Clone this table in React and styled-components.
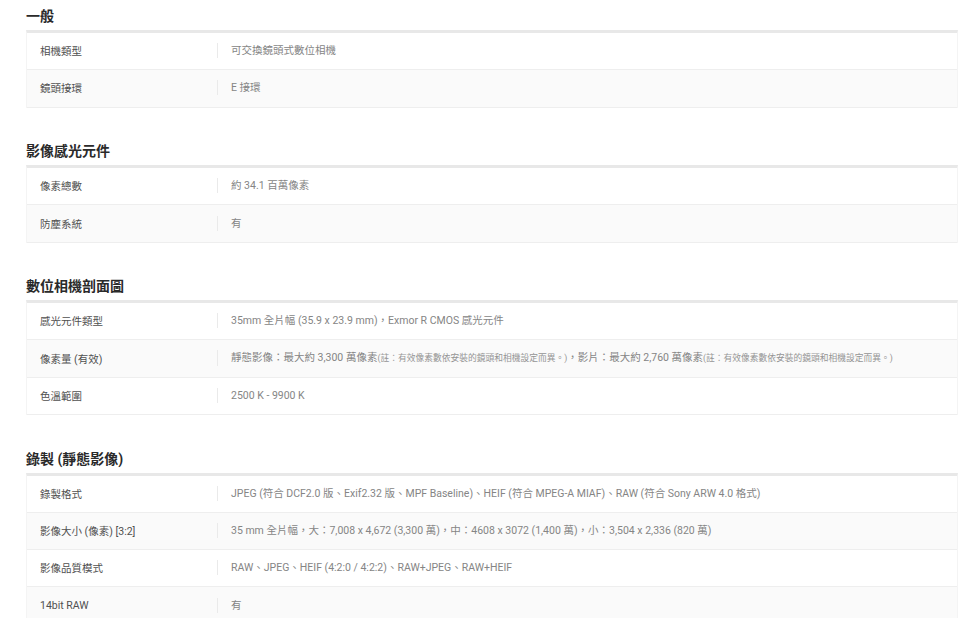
import React from "react";
import styled, { createGlobalStyle } from "styled-components";

const GlobalStyle = createGlobalStyle`
  html, body {
    margin: 0;
    padding: 0;
    background: #fff;
  }
  body {
    font-family: Roboto, "Noto Sans CJK TC", sans-serif;
    -webkit-font-smoothing: antialiased;
  }
`;

const Page = styled.div`
  width: 960px;
  padding: 6px 2px 0 26px;
  box-sizing: border-box;
`;

const Section = styled.section`
  margin-bottom: 33.5px;
`;

const Title = styled.h3`
  margin: 0 0 4px;
  font-size: 14px;
  line-height: 20px;
  font-weight: 700;
  color: #2a2a2a;
`;

const Table = styled.div`
  border-top: 3px solid #e8e8e8;
  border-left: 1px solid #f4f4f4;
  border-right: 1px solid #f4f4f4;
`;

const Row = styled.div`
  display: flex;
  align-items: center;
  height: 37.3px;
  box-sizing: border-box;
  border-bottom: 1px solid #eeeeee;
  padding-bottom: 1px;
  background: ${({ shaded }) => (shaded ? "#fafafa" : "#fff")};
`;

const Label = styled.div`
  width: 190px;
  flex: none;
  padding-left: 13px;
  box-sizing: border-box;
  font-size: 10.5px;
  color: #505050;
`;

const Value = styled.div`
  flex: 1;
  border-left: 1px solid #eaeaea;
  padding-left: 13px;
  line-height: 15px;
  font-size: 10.5px;
  color: #858585;
  white-space: nowrap;
`;

const Note = styled.span`
  font-size: 8.75px;
  color: #959595;
`;

const note = "(註：有效像素數依安裝的鏡頭和相機設定而異。)";

const sections = [
  {
    title: "一般",
    rows: [
      ["相機類型", "可交換鏡頭式數位相機"],
      ["鏡頭接環", "E 接環"],
    ],
  },
  {
    title: "影像感光元件",
    rows: [
      ["像素總數", "約 34.1 百萬像素"],
      ["防塵系統", "有"],
    ],
  },
  {
    title: "數位相機剖面圖",
    rows: [
      ["感光元件類型", "35mm 全片幅 (35.9 x 23.9 mm)，Exmor R CMOS 感光元件"],
      [
        "像素量 (有效)",
        <>
          靜態影像：最大約 3,300 萬像素<Note>{note}</Note>，影片：最大約 2,760 萬像素<Note>{note}</Note>
        </>,
      ],
      ["色溫範圍", "2500 K - 9900 K"],
    ],
  },
  {
    title: "錄製 (靜態影像)",
    rows: [
      ["錄製格式", "JPEG (符合 DCF2.0 版、Exif2.32 版、MPF Baseline)、HEIF (符合 MPEG-A MIAF)、RAW (符合 Sony ARW 4.0 格式)"],
      ["影像大小 (像素) [3:2]", "35 mm 全片幅，大：7,008 x 4,672 (3,300 萬)，中：4608 x 3072 (1,400 萬)，小：3,504 x 2,336 (820 萬)"],
      ["影像品質模式", "RAW、JPEG、HEIF (4:2:0 / 4:2:2)、RAW+JPEG、RAW+HEIF"],
      ["14bit RAW", "有"],
    ],
  },
];

export default function App() {
  return (
    <>
      <GlobalStyle />
      <Page>
        {sections.map((s) => (
          <Section key={s.title}>
            <Title>{s.title}</Title>
            <Table>
              {s.rows.map(([label, value], i) => (
                <Row key={label} shaded={i % 2 === 1}>
                  <Label>{label}</Label>
                  <Value>{value}</Value>
                </Row>
              ))}
            </Table>
          </Section>
        ))}
      </Page>
    </>
  );
}
